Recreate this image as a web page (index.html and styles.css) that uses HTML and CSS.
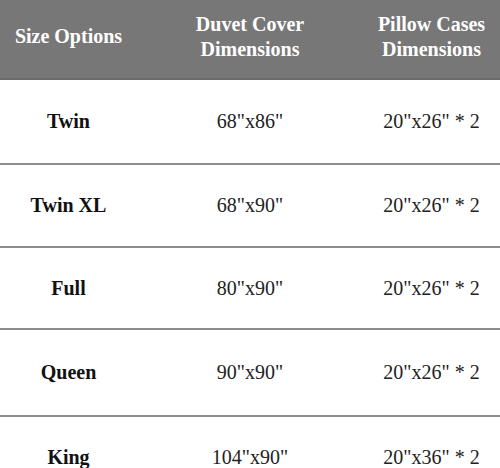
FILE: index.html
```html
<!DOCTYPE html>
<html>
<head>
<meta charset="utf-8">
<link rel="stylesheet" href="styles.css">
</head>
<body>
<div class="chart">
  <div class="row head">
    <div class="cell c1">Size Options</div>
    <div class="cell c2">Duvet Cover<br>Dimensions</div>
    <div class="cell c3">Pillow Cases<br>Dimensions</div>
  </div>
  <div class="row r1">
    <div class="cell c1 name">Twin</div>
    <div class="cell c2">68"x86"</div>
    <div class="cell c3">20"x26" * 2</div>
  </div>
  <div class="row r2">
    <div class="cell c1 name">Twin XL</div>
    <div class="cell c2">68"x90"</div>
    <div class="cell c3">20"x26" * 2</div>
  </div>
  <div class="row r3">
    <div class="cell c1 name">Full</div>
    <div class="cell c2">80"x90"</div>
    <div class="cell c3">20"x26" * 2</div>
  </div>
  <div class="row r4">
    <div class="cell c1 name">Queen</div>
    <div class="cell c2">90"x90"</div>
    <div class="cell c3">20"x26" * 2</div>
  </div>
  <div class="row r5">
    <div class="cell c1 name">King</div>
    <div class="cell c2">104"x90"</div>
    <div class="cell c3">20"x36" * 2</div>
  </div>
</div>
</body>
</html>
```

FILE: styles.css
```css
html, body {
  margin: 0;
  padding: 0;
  background: #ffffff;
}
body {
  width: 500px;
  height: 468px;
  overflow: hidden;
  font-family: "Liberation Serif", "Times New Roman", serif;
  font-size: 20px;
  color: #222222;
}
.chart {
  display: flex;
  flex-direction: column;
  width: 500px;
}
.row {
  display: flex;
  align-items: center;
  box-sizing: border-box;
  border-bottom: 2px solid #8d8d8d;
}
.cell {
  text-align: center;
}
.c1 { width: 137px; }
.c2 { width: 226px; }
.c3 { width: 137px; }
.head {
  height: 80px;
  background: #777777;
  color: #ffffff;
  font-weight: bold;
  line-height: 25px;
  padding-bottom: 5px;
  border-bottom: 2px solid #6b6b6b;
}
.name {
  font-weight: bold;
  color: #111111;
}
.r1 { height: 85px; }
.r2 { height: 83px; }
.r3 { height: 82px; }
.r4 { height: 87px; }
.r5 {
  height: 51px;
  align-items: flex-start;
  padding-top: 29px;
  border-bottom: none;
}
```
